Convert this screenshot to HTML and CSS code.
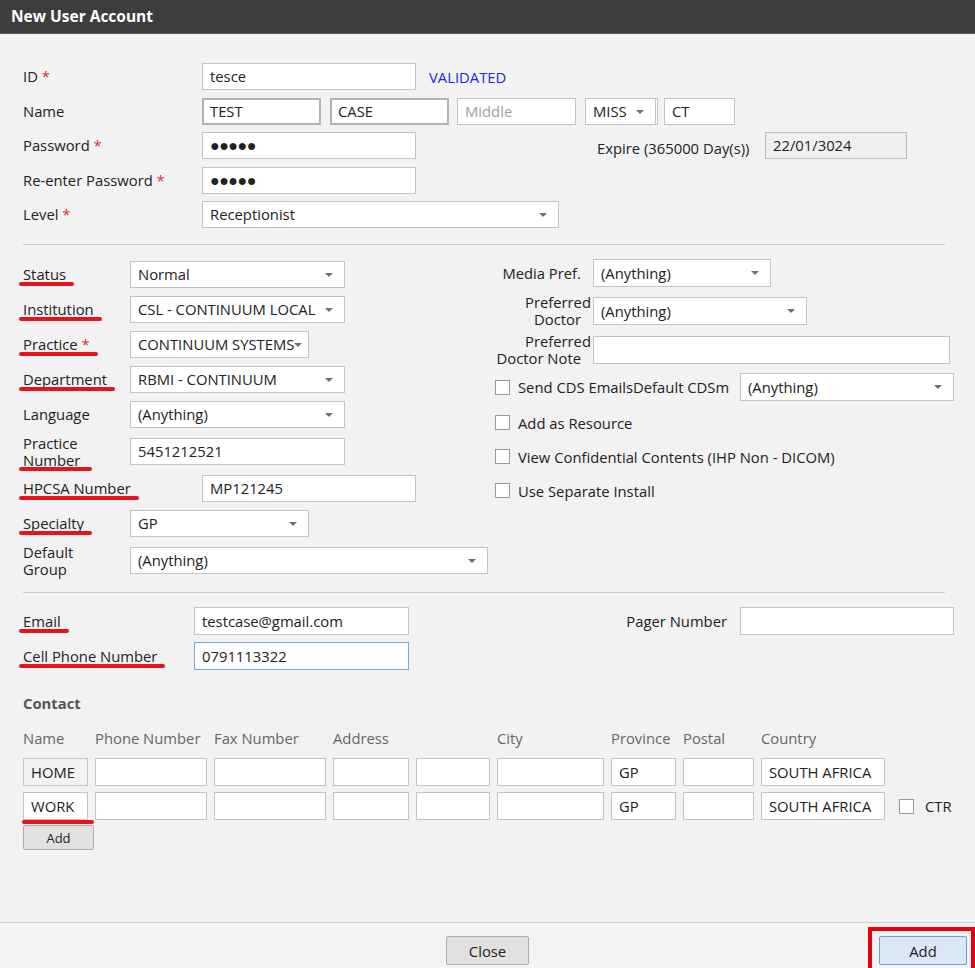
FILE: index.html
```html
<!DOCTYPE html>
<html lang="en">
<head>
	<meta charset="UTF-8" />
	<title>New User Account</title>
	<link rel="stylesheet" href="styles.css">
</head>
<body>
	<div class="dialog">
		<div class="titlebar">New User Account</div>

		<div class="content">
			<!-- account -->
			<div class="account">
				<div class="row">
					<div class="lbl w179">ID <span class="req">*</span></div>
					<div class="field w214">tesce</div>
					<span class="validated">VALIDATED</span>
				</div>
				<div class="row">
					<div class="lbl w179">Name</div>
					<div class="field thick w119 mr9">TEST</div>
					<div class="field thick w119 mr8">CASE</div>
					<div class="field w119 mr9 placeholder">Middle</div>
					<div class="field select w73 miss">MISS</div>
					<div class="field w71">CT</div>
				</div>
				<div class="row">
					<div class="lbl w179">Password <span class="req">*</span></div>
					<div class="field w214 dots">●●●●●</div>
					<div class="expire">Expire (365000 Day(s))</div>
					<div class="field readonly w142">22/01/3024</div>
				</div>
				<div class="row">
					<div class="lbl w179">Re-enter Password <span class="req">*</span></div>
					<div class="field w214 dots">●●●●●</div>
				</div>
				<div class="row">
					<div class="lbl w179">Level <span class="req">*</span></div>
					<div class="field select w357">Receptionist</div>
				</div>
			</div>

			<hr class="sep sep-top">

			<!-- details -->
			<div class="details">
				<div class="left">
					<div class="row">
						<div class="lbl w107"><span class="hl">Status</span></div>
						<div class="field select w215">Normal</div>
					</div>
					<div class="row">
						<div class="lbl w107"><span class="hl">Institution</span></div>
						<div class="field select w215">CSL - CONTINUUM LOCAL</div>
					</div>
					<div class="row">
						<div class="lbl w107"><span class="hl">Practice <span class="req">*</span></span></div>
						<div class="field select w179 tight">CONTINUUM SYSTEMS</div>
					</div>
					<div class="row">
						<div class="lbl w107"><span class="hl">Department</span></div>
						<div class="field select w215">RBMI - CONTINUUM</div>
					</div>
					<div class="row">
						<div class="lbl w107">Language</div>
						<div class="field select w215">(Anything)</div>
					</div>
					<div class="row tall">
						<div class="lbl w107 two"><span class="hl block">Practice<br>Number</span></div>
						<div class="field w215">5451212521</div>
					</div>
					<div class="row">
						<div class="lbl w179"><span class="hl">HPCSA Number</span></div>
						<div class="field w214">MP121245</div>
					</div>
					<div class="row">
						<div class="lbl w107"><span class="hl">Specialty</span></div>
						<div class="field select w179">GP</div>
					</div>
					<div class="row tall last">
						<div class="lbl w107 two">Default<br>Group</div>
						<div class="field select w358">(Anything)</div>
					</div>
				</div>

				<div class="right">
					<div class="rrow">
						<div class="rlbl">Media Pref.</div>
						<div class="field select w178">(Anything)</div>
					</div>
					<div class="rrow doc">
						<div class="rlbl two">Preferred<br><span class="tail">Doctor</span></div>
						<div class="field select w214">(Anything)</div>
					</div>
					<div class="rrow note">
						<div class="rlbl two wide">Preferred<br><span class="tail">Doctor Note</span></div>
						<div class="field w357"></div>
					</div>
					<div class="rrow">
						<span class="box"></span>
						<span>Send CDS Emails</span><span>Default CDSm</span>
						<div class="field select w214 push">(Anything)</div>
					</div>
					<div class="rrow check">
						<span class="box"></span><span>Add as Resource</span>
					</div>
					<div class="rrow check">
						<span class="box"></span><span>View Confidential Contents (IHP Non - DICOM)</span>
					</div>
					<div class="rrow check">
						<span class="box"></span><span>Use Separate Install</span>
					</div>
				</div>
			</div>

			<hr class="sep sep-bottom">

			<!-- communication -->
			<div class="comms">
				<div class="row">
					<div class="lbl w171"><span class="hl">Email</span></div>
					<div class="field w215">testcase@gmail.com</div>
					<div class="pager">Pager Number</div>
					<div class="field w214"></div>
				</div>
				<div class="row">
					<div class="lbl w171"><span class="hl">Cell Phone Number</span></div>
					<div class="field w215 focus">0791113322</div>
				</div>
			</div>

			<div class="contact">
				<div class="contact-title">Contact</div>
				<div class="contact-grid">
					<div class="head">Name</div>
					<div class="head">Phone Number</div>
					<div class="head">Fax Number</div>
					<div class="head">Address</div>
					<div class="head"></div>
					<div class="head">City</div>
					<div class="head">Province</div>
					<div class="head">Postal</div>
					<div class="head">Country</div>
					<div class="head"></div>

					<div class="field cell grey">HOME</div>
					<div class="field cell"></div>
					<div class="field cell"></div>
					<div class="field cell"></div>
					<div class="field cell"></div>
					<div class="field cell"></div>
					<div class="field cell">GP</div>
					<div class="field cell"></div>
					<div class="field cell">SOUTH AFRICA</div>
					<div></div>

					<div class="field cell hl-box">WORK</div>
					<div class="field cell"></div>
					<div class="field cell"></div>
					<div class="field cell"></div>
					<div class="field cell"></div>
					<div class="field cell"></div>
					<div class="field cell">GP</div>
					<div class="field cell"></div>
					<div class="field cell">SOUTH AFRICA</div>
					<div class="ctr"><span class="box"></span>CTR</div>
				</div>
				<button class="btn small">Add</button>
			</div>
		</div>

		<div class="footer">
			<div></div>
			<button class="btn close">Close</button>
			<div class="callout"><button class="btn primary">Add</button></div>
		</div>
	</div>
</body>
</html>
```

FILE: styles.css
```css
html {
	background: #f2f2f2;
}

body {
	margin: 0;
	font-family: "Open Sans", "Noto Sans", sans-serif;
	font-size: 14.8px;
	color: #222;
}

.dialog {
	height: 968px;
	display: flex;
	flex-direction: column;
}

.titlebar {
	height: 34px;
	box-sizing: border-box;
	padding-left: 11px;
	background: #3d3d3d;
	border-bottom: 1px solid #5a5a5a;
	color: #fff;
	font-size: 15.5px;
	font-weight: bold;
	line-height: 32px;
}

.content {
	flex: 1;
	padding: 29px 21px 0 23px;
}

/* rows and labels */

.row {
	display: flex;
	align-items: center;
	height: 27px;
	margin-bottom: 7.5px;
}

.lbl {
	flex: none;
	line-height: 17px;
	white-space: nowrap;
}

.req {
	color: #e03030;
}

.w107 { width: 107px; }
.w171 { width: 171px; }
.w179 { width: 179px; }

/* fields */

.field {
	flex: none;
	position: relative;
	height: 27px;
	box-sizing: border-box;
	padding: 0 7px;
	background: #fff;
	border: 1px solid #c3c3c3;
	line-height: 25px;
	white-space: nowrap;
	overflow: hidden;
}

.field.thick {
	border: 2px solid #b2b2b2;
	line-height: 23px;
	padding-left: 6px;
}

.field.placeholder {
	color: #a0a0a0;
}

.field.readonly {
	background: #f0f0f0;
	border-color: #bdbdbd;
}

.field.focus {
	border-color: #7ba4da;
}

.field.dots {
	font-size: 16px;
	letter-spacing: -0.5px;
}

.select {
	padding-right: 24px;
}

.select::after {
	content: "";
	position: absolute;
	right: 11px;
	top: 11px;
	border-left: 4px solid transparent;
	border-right: 4px solid transparent;
	border-top: 4px solid #707070;
}

.select.tight {
	padding-right: 16px;
}

.select.tight::after {
	right: 6px;
}

.select.miss {
	margin-right: 6px;
	border-right: 3px double #c3c3c3;
}

.w71 { width: 71px; }
.w73 { width: 73px; }
.w119 { width: 119px; }
.w142 { width: 142px; }
.w178 { width: 178px; }
.w214 { width: 214px; }
.w215 { width: 215px; }
.w357 { width: 357px; }
.w358 { width: 358px; }

.mr8 { margin-right: 8px; }
.mr9 { margin-right: 9px; }

.validated {
	margin-left: 13px;
	color: #2424f0;
}

.expire {
	width: 168px;
	margin-left: 181px;
	padding-top: 4px;
	white-space: nowrap;
}

/* separators */

.sep {
	height: 0;
	border: 0;
	border-top: 1px solid #cdcdcd;
	margin: 0 9px 0 0;
}

.sep-top {
	margin-top: 16px;
	margin-bottom: 14px;
}

.sep-bottom {
	margin-top: 16px;
	margin-bottom: 14px;
}

/* details columns */

.details {
	display: flex;
}

.left {
	width: 472px;
	padding-top: 2px;
}

.left .row {
	margin-bottom: 8px;
}

.left .row.tall {
	height: 31px;
}

.left .row.last {
	margin-bottom: 0;
}

.right {
	flex: 1;
	display: flex;
	flex-direction: column;
	gap: 9px;
}

.rrow {
	display: flex;
	align-items: center;
	height: 28px;
	white-space: nowrap;
}

.rrow.doc {
	margin-top: 1px;
}

.rrow.note {
	margin-top: 2px;
}

.rrow .field {
	height: 28px;
	line-height: 26px;
}

.rrow.check {
	height: 25px;
}

.rlbl {
	width: 98px;
	box-sizing: border-box;
	padding-right: 12px;
	text-align: right;
	line-height: 17px;
}

.rlbl.two {
	padding-right: 2px;
}

.rlbl.wide {
	width: 102px;
	margin-left: -4px;
}

.rlbl .tail {
	padding-right: 10px;
}

.push {
	margin-left: auto;
}

.box {
	flex: none;
	display: inline-block;
	width: 15px;
	height: 15px;
	box-sizing: border-box;
	margin-right: 8px;
	background: #fff;
	border: 1px solid #9a9a9a;
}

/* email / phone */

.comms .row {
	height: 28px;
	margin-bottom: 7px;
}

.comms .field {
	height: 28px;
	line-height: 26px;
}

.pager {
	flex: 1;
	padding-right: 13px;
	text-align: right;
}

/* contact table */

.contact-title {
	margin-top: 23px;
	color: #555;
	font-weight: bold;
	line-height: 20px;
}

.contact-grid {
	display: grid;
	grid-template-columns: 65px 112px 112px 76px 74px 107px 65px 71px 124px auto;
	column-gap: 7px;
	row-gap: 6px;
	margin-top: 15px;
}

.head {
	color: #666;
	line-height: 20px;
	margin-bottom: 4px;
	white-space: nowrap;
}

.field.cell {
	height: 28px;
	line-height: 26px;
}

.field.grey {
	background: #f2f2f2;
}

.ctr {
	display: flex;
	align-items: center;
	padding-left: 7px;
}

.ctr .box {
	margin-right: 11px;
}

/* red annotation marks */

.hl {
	position: relative;
	display: inline-block;
}

.hl::after,
.hl-box::after {
	content: "";
	position: absolute;
	left: -4px;
	right: -8px;
	bottom: -3px;
	height: 4px;
	border-radius: 2px;
	background: #e8121c;
}

.hl.block::after {
	bottom: -2px;
	right: -12px;
}

.hl-box {
	overflow: visible;
}

.hl-box::after {
	left: -2px;
	right: -7px;
	bottom: -5px;
}

/* buttons */

.btn {
	box-sizing: border-box;
	font-family: "Open Sans", "Noto Sans", sans-serif;
	font-size: 14.8px;
	color: #222;
	background: #e1e1e1;
	border: 1px solid #adadad;
	border-radius: 2px;
	padding: 0;
}

.btn.small {
	display: block;
	width: 71px;
	height: 25px;
	margin-top: 5px;
	font-size: 13px;
}

.footer {
	height: 46px;
	box-sizing: border-box;
	border-top: 1px solid #d2d2d2;
	background: #f3f3f3;
	display: grid;
	grid-template-columns: 1fr auto 1fr;
	align-items: start;
	padding-top: 4px;
}

.btn.close {
	width: 83px;
	height: 29px;
	margin-top: 9px;
}

.callout {
	justify-self: end;
	border: 4px solid #e60012;
	border-bottom: 0;
	padding: 5px 4px 3px 7px;
}

.btn.primary {
	display: block;
	width: 88px;
	height: 29px;
	background: #dce7f5;
	border-color: #6f9bd8;
}
```
